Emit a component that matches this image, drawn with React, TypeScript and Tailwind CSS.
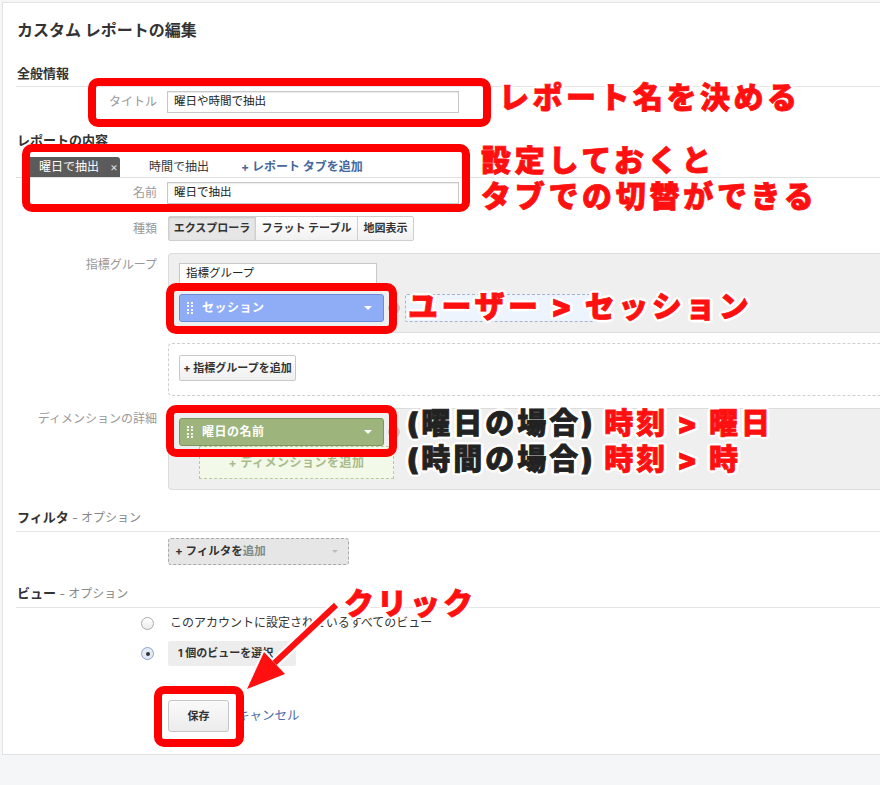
import React from "react";

const JP = "font-['Inter','Noto_Sans_CJK_JP',sans-serif]";
const OUT =
  "[text-shadow:3px_0_0_#fff,-3px_0_0_#fff,0_3px_0_#fff,0_-3px_0_#fff,2px_2px_0_#fff,-2px_-2px_0_#fff,2px_-2px_0_#fff,-2px_2px_0_#fff,3px_1px_0_#fff,-3px_1px_0_#fff,3px_-1px_0_#fff,-3px_-1px_0_#fff]";

function Label({ children, pt = "pt-0" }: { children: React.ReactNode; pt?: string }) {
  return (
    <div className={`w-[154px] shrink-0 text-right text-[12px] leading-[16px] text-[#999] whitespace-nowrap ${pt}`}>{children}</div>
  );
}

function Input({ value }: { value: string }) {
  return (
    <div className="w-[292px] h-[22px] border border-[#c8c8c8] bg-white flex items-center pl-[6px] text-[11.5px] text-[#222] shadow-[inset_0_1px_1px_rgba(0,0,0,0.08)]">
      {value}
    </div>
  );
}

function Handle() {
  return (
    <div className="grid grid-cols-2 gap-x-[2px] gap-y-[1.5px]">
      {Array.from({ length: 8 }).map((_, i) => (
        <div key={i} className="w-[2px] h-[2px] bg-white/90" />
      ))}
    </div>
  );
}

function Chip({ text, green }: { text: string; green?: boolean }) {
  return (
    <div
      className={`w-[205px] h-[28px] rounded-[3px] border flex items-center pl-[7px] pr-[11px] text-white text-[12px] font-bold ${
        green ? "bg-[#9db57c] border-[#7c9860]" : "bg-[#8fadf6] border-[#6c8bd9]"
      }`}
    >
      <Handle />
      <span className="ml-[9px] tracking-[0.5px]">{text}</span>
      <span className="ml-auto w-0 h-0 border-l-[4px] border-r-[4px] border-t-[4px] border-l-transparent border-r-transparent border-t-white" />
    </div>
  );
}

function XCircle() {
  return (
    <div className="ml-[4px] w-[12px] h-[12px] rounded-full bg-[#c4c4c4] flex items-center justify-center text-[9px] leading-none text-white">
      ×
    </div>
  );
}

function Radio({ checked }: { checked?: boolean }) {
  return (
    <div
      className={`w-[13px] h-[13px] rounded-full border flex items-center justify-center ${
        checked ? "border-[#8ea3c6] bg-[#e2eaf6]" : "border-[#aaa] bg-gradient-to-b from-white to-[#ececec]"
      }`}
    >
      {checked && <div className="w-[4px] h-[4px] rounded-full bg-[#333]" />}
    </div>
  );
}

function Ann({
  left,
  top,
  size,
  lh,
  children,
  tracking = "tracking-[3.5px]",
}: {
  left: number;
  top: number;
  size: string;
  lh: string;
  children: React.ReactNode;
  tracking?: string;
}) {
  return (
    <div
      className={`absolute whitespace-nowrap font-black text-[#ff1010] [-webkit-text-stroke:0.8px_#ff1010] ${size} ${lh} ${tracking} ${OUT}`}
      style={{ left, top }}
    >
      {children}
    </div>
  );
}

function Dark({ children }: { children: React.ReactNode }) {
  return <span className="text-[#222] [-webkit-text-stroke:0.8px_#222]">{children}</span>;
}

export default function App() {
  return (
    <div className={`relative w-[880px] h-[785px] overflow-hidden bg-[#f5f6f8] ${JP}`}>
      <div className="ml-[2px] mt-[2px] h-[753px] bg-white border-l border-t border-b border-[#e2e2e2] text-[#333]">
        {/* Title */}
        <div className="pl-[14px] pt-[17px] h-[37px] text-[16px] leading-[20px] font-bold text-[#333]">
          カスタム レポートの編集
        </div>

        {/* 全般情報 */}
        <div className="ml-[13px] mt-[24px] pl-[1px] pb-[4px] border-b border-[#e5e5e5] text-[13px] leading-[18px] font-bold">
          全般情報
        </div>
        <div className="flex items-center mt-[4px]">
          <Label>タイトル</Label>
          <div className="pl-[10px]">
            <Input value="曜日や時間で抽出" />
          </div>
        </div>

        {/* レポートの内容 */}
        <div className="ml-[14px] mt-[18px] text-[13px] leading-[18px] font-bold">レポートの内容</div>
        <div className="ml-[13px] mt-[8px] border-b border-[#e0e0e0] h-[21px] flex items-end pl-[6px] text-[12px] whitespace-nowrap">
          <div className="w-[98px] h-[20px] bg-[#5b5b5b] rounded-t-[3px] flex items-center pl-[17px] text-white">
            <span>曜日で抽出</span>
            <span className="ml-[11px] text-[12px] text-[#ddd]">×</span>
          </div>
          <div className="h-[20px] flex items-center ml-[29px] text-[#333]">時間で抽出</div>
          <div className="h-[20px] flex items-center ml-[32px] text-[#47679f] font-bold">+ レポート タブを追加</div>
        </div>
        <div className="flex items-center mt-[4px]">
          <Label>名前</Label>
          <div className="pl-[10px]">
            <Input value="曜日で抽出" />
          </div>
        </div>

        {/* 種類 */}
        <div className="flex items-center mt-[12px]">
          <Label>種類</Label>
          <div className="pl-[11px]">
            <div className="flex h-[25px] border border-[#cfcfcf] rounded-[2px] text-[11px] font-bold text-[#333] whitespace-nowrap">
              <div className="w-[87px] flex items-center justify-center bg-[#e6e6e6] shadow-[inset_0_1px_2px_rgba(0,0,0,0.15)] border-r border-[#cfcfcf]">
                エクスプローラ
              </div>
              <div className="w-[102px] flex items-center justify-center bg-gradient-to-b from-white to-[#f1f1f1] border-r border-[#cfcfcf]">
                フラット テーブル
              </div>
              <div className="w-[55px] flex items-center justify-center bg-gradient-to-b from-white to-[#f1f1f1]">
                地図表示
              </div>
            </div>
          </div>
        </div>

        {/* 指標グループ */}
        <div className="flex mt-[12px]">
          <Label pt="pt-[4px]">指標グループ</Label>
          <div className="pl-[11px] flex-1">
            <div className="bg-[#efefef] border-t border-l border-b border-[#dcdcdc] rounded-l-[4px] h-[80px] pl-[10px] pt-[9px]">
              <div className="w-[198px] h-[22px] bg-white border border-[#c8c8c8] flex items-center pl-[6px] text-[11.5px] text-[#222]">
                指標グループ
              </div>
              <div className="flex items-center mt-[9px]">
                <Chip text="セッション" />
                <XCircle />
                <div className="ml-[5px] w-[192px] h-[28px] border border-dashed border-[#a7b5cc] bg-[#eef4fd] rounded-[2px]" />
              </div>
            </div>
            <div className="mt-[10px] h-[53px] border-t border-l border-b border-dashed border-[#cfcfcf] rounded-l-[4px] pl-[10px] pt-[11px]">
              <div className="w-[117px] h-[26px] border border-[#c8c8c8] rounded-[2px] bg-gradient-to-b from-white to-[#efefef] flex items-center justify-center text-[11px] font-bold text-[#333] whitespace-nowrap">
                + 指標グループを追加
              </div>
            </div>
          </div>
        </div>

        {/* ディメンション */}
        <div className="flex mt-[12px]">
          <Label pt="pt-[3px]">ディメンションの詳細</Label>
          <div className="pl-[11px] flex-1">
            <div className="bg-[#efefef] border-t border-l border-b border-[#dcdcdc] rounded-l-[4px] h-[82px] pl-[10px] pt-[9px]">
              <div className="flex items-center">
                <Chip text="曜日の名前" green />
                <XCircle />
              </div>
              <div className="ml-[20px] w-[195px] h-[33px] border border-dashed border-[#b7cb98] bg-[#f2f9e8] flex items-center justify-center text-[12px] font-bold text-[#a8bc8b] tracking-[0.5px]">
                + ディメンションを追加
              </div>
            </div>
          </div>
        </div>

        {/* フィルタ */}
        <div className="ml-[13px] mt-[18px] pl-[1px] pb-[4px] border-b border-[#e5e5e5] text-[13px] leading-[18px]">
          <span className="font-bold text-[#333]">フィルタ</span>
          <span className="text-[12px] text-[#888]"> - オプション</span>
        </div>
        <div className="flex mt-[6px]">
          <div className="w-[165px] shrink-0" />
          <div className="w-[181px] h-[27px] bg-[#e6e6e6] border border-dashed border-[#a9a9a9] rounded-[3px] flex items-center pl-[6px] pr-[10px] text-[11.5px] font-bold">
            <span className="text-[#333]">+ フィルタを</span>
            <span className="text-[#7f8c88]">追加</span>
            <span className="ml-auto w-0 h-0 border-l-[3px] border-r-[3px] border-t-[3px] border-l-transparent border-r-transparent border-t-[#bbb]" />
          </div>
        </div>

        {/* ビュー */}
        <div className="ml-[13px] mt-[19px] pl-[1px] pb-[4px] border-b border-[#e5e5e5] text-[13px] leading-[18px]">
          <span className="font-bold text-[#333]">ビュー</span>
          <span className="text-[12px] text-[#888]"> - オプション</span>
        </div>
        <div className="flex items-center mt-[7px] pl-[138px] h-[16px]">
          <Radio />
          <span className="ml-[16px] text-[12px] text-[#333]">このアカウントに設定されているすべてのビュー</span>
        </div>
        <div className="flex items-center mt-[10px] pl-[138px]">
          <Radio checked />
          <div className="ml-[14px] w-[128px] h-[25px] bg-[#ededed] rounded-[2px] flex items-center pl-[10px] text-[11px] font-bold text-[#333] whitespace-nowrap">
            1&nbsp;個のビューを選択
          </div>
        </div>

        {/* buttons */}
        <div className="flex items-center mt-[34px] pl-[165px]">
          <div className="w-[61px] h-[32px] border border-[#c6c6c6] rounded-[3px] bg-gradient-to-b from-[#fafafa] to-[#ececec] flex items-center justify-center text-[11px] font-bold text-[#333]">
            保存
          </div>
          <span className="ml-[8px] text-[12.5px] text-[#4a6aa6]">キャンセル</span>
        </div>
      </div>

      {/* Annotation boxes */}
      <div className="absolute left-[88px] top-[78px] w-[403px] h-[49px] border-[8px] border-[#ff0000] rounded-[10px]" />
      <div className="absolute left-[22px] top-[144px] w-[448px] h-[68px] border-[8px] border-[#ff0000] rounded-[10px]" />
      <div className="absolute left-[166px] top-[283px] w-[231px] h-[51px] border-[8px] border-[#ff0000] rounded-[10px]" />
      <div className="absolute left-[166px] top-[405px] w-[231px] h-[52px] border-[8px] border-[#ff0000] rounded-[10px]" />
      <div className="absolute left-[154px] top-[686px] w-[90px] h-[61px] border-[8px] border-[#ff0000] rounded-[10px]" />

      {/* Annotation texts */}
      <Ann left={499} top={82} size="text-[30px]" lh="leading-[30px]">
        レポート名を決める
      </Ann>
      <Ann left={481} top={142} size="text-[30px]" lh="leading-[36px]" tracking="tracking-[3.7px]">
        設定しておくと
        <br />
        タブでの切替ができる
      </Ann>
      <Ann left={408} top={291} size="text-[30px]" lh="leading-[30px]" tracking="tracking-[3.5px]">
        ユーザー&nbsp;&gt;&nbsp;セッション
      </Ann>
      <Ann left={407} top={406} size="text-[29px]" lh="leading-[36px]" tracking="tracking-[3px]">
        <Dark>(曜日の場合)</Dark> 時刻 &gt; 曜日
        <br />
        <Dark>(時間の場合)</Dark> 時刻 &gt; 時
      </Ann>
      <Ann left={344} top={588} size="text-[30px]" lh="leading-[30px]" tracking="tracking-[3px]">
        クリック
      </Ann>

      {/* Arrow */}
      <svg className="absolute left-[230px] top-[590px]" width="120" height="110" viewBox="0 0 120 110">
        <g stroke="#fff" strokeWidth="4" strokeLinejoin="round" fill="#fff">
          <line x1="106" y1="15" x2="44.6" y2="72.9" strokeWidth="10" strokeLinecap="round" />
          <polygon points="17,99 55,84 34,62" />
        </g>
        <line x1="106" y1="15" x2="44.6" y2="72.9" stroke="#ff1010" strokeWidth="6" />
        <polygon points="17,99 55,84 34,62" fill="#ff1010" />
      </svg>
    </div>
  );
}
